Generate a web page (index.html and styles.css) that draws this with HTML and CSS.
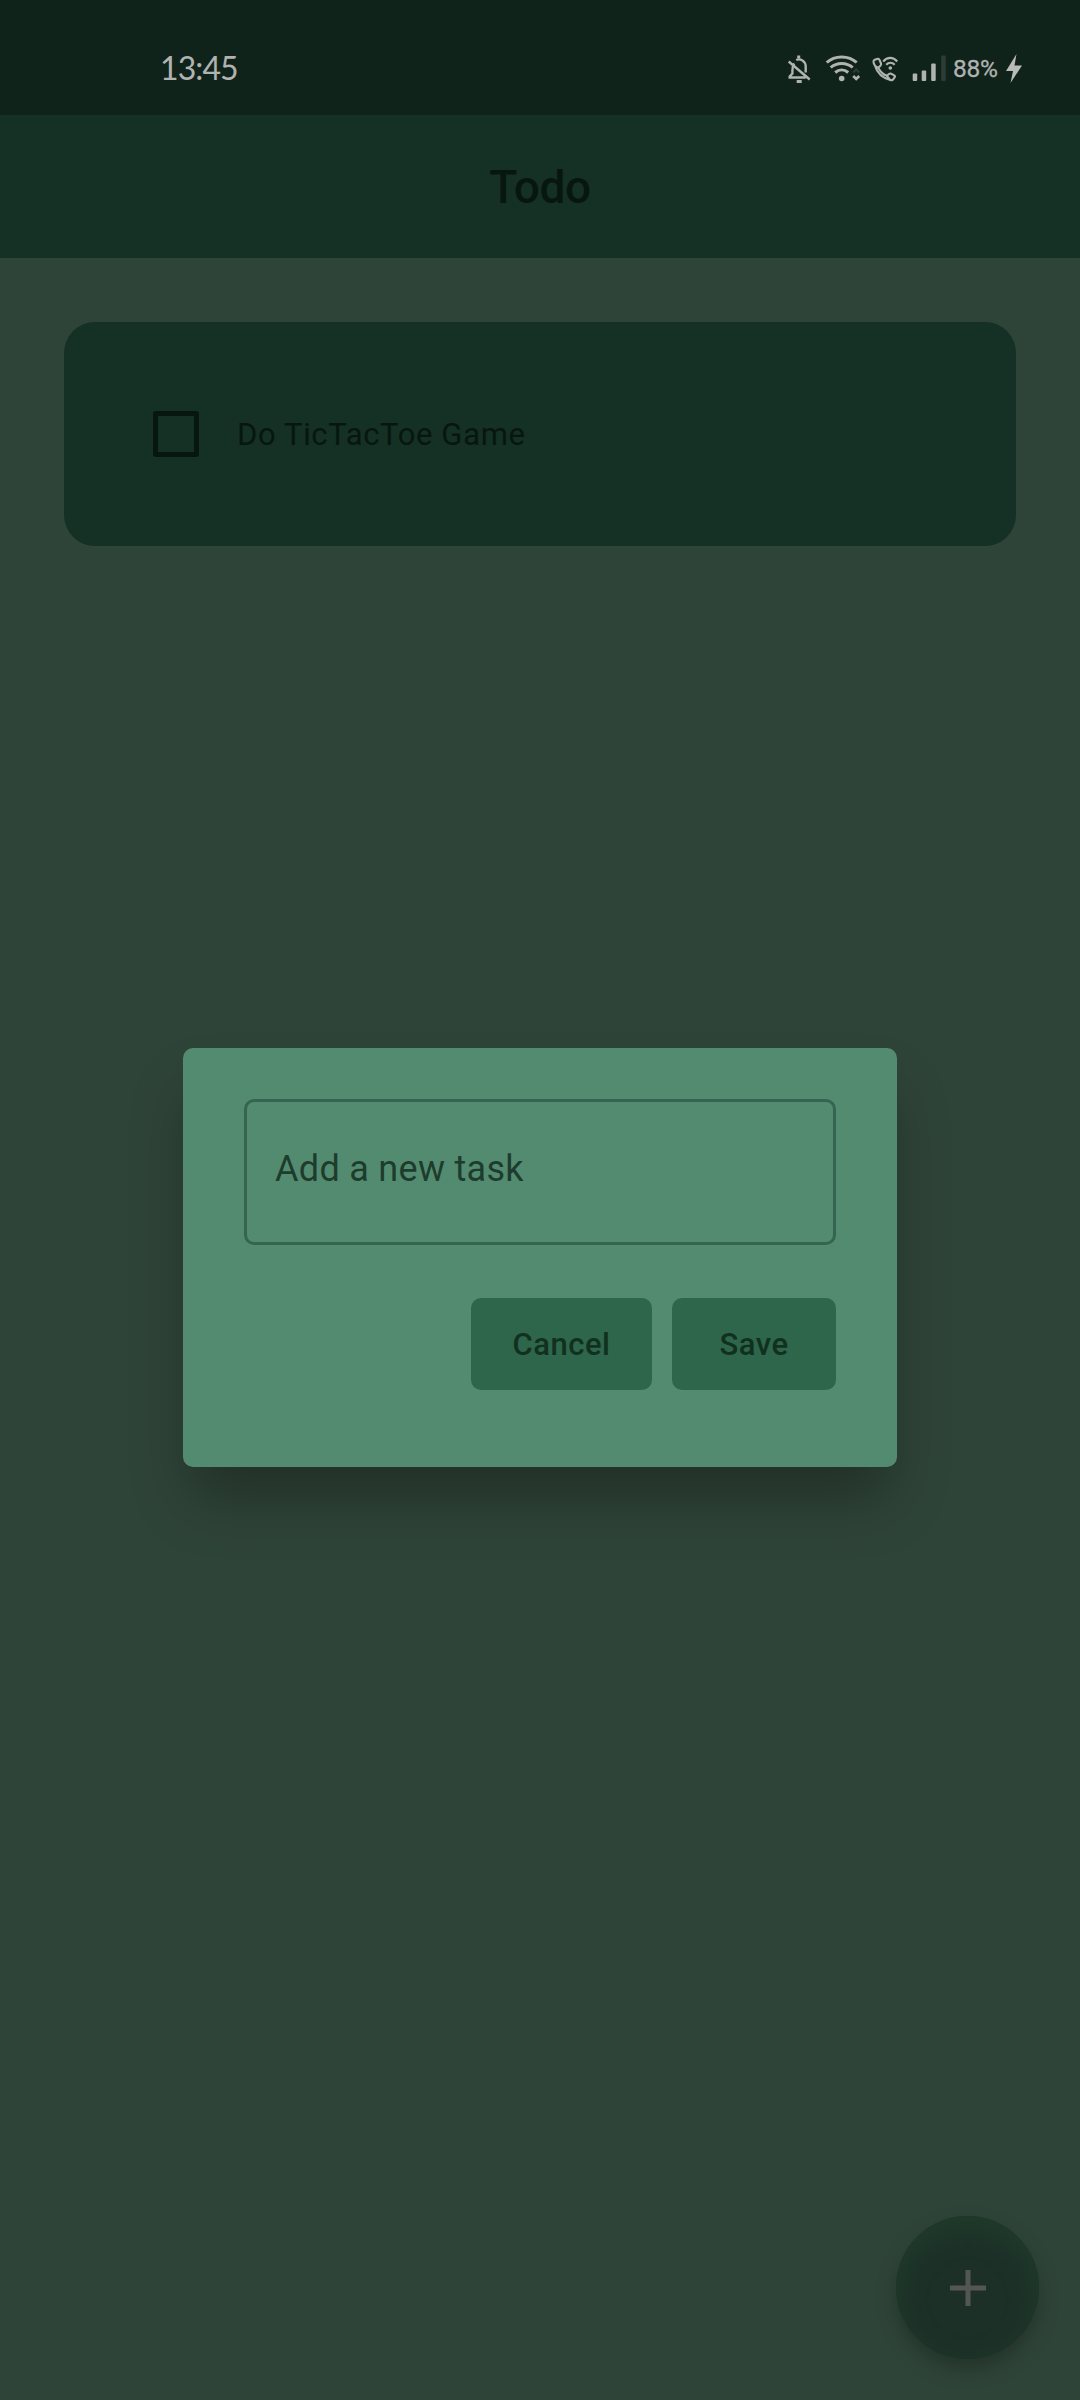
FILE: index.html
```html
<!DOCTYPE html>
<html lang="en">
<head>
<meta charset="utf-8">
<title>Todo</title>
<link rel="stylesheet" href="styles.css">
</head>
<body>
<div class="screen">
  <header class="status">
    <span class="clock">13:45</span>
    <svg class="status-icons" width="166" height="32" viewBox="-1.700 -0.500 166 32" fill="none" stroke="#b0b3b1" stroke-width="2.4">
      <g>
        <path d="M6.500 9C5 11 4.700 13 4.700 16V19L2 22V23H18M8.500 5.500C13 3.500 18 7 18 12V18M1 7L22 25"/>
        <path d="M11 1V4M9 27H14" stroke-width="3"/>
      </g>
      <g stroke-width="3">
        <path d="M39 8C47 .5 61 .5 69 8M43 13C49 7.500 59 7.500 65 13M47.500 18C51.500 14.500 56.500 14.500 60.500 18"/>
        <circle cx="54" cy="24" r="2.800" fill="#b0b3b1" stroke="none"/>
        <path d="M65.500 21.500L68.500 24.500L71.500 21.500" stroke-width="2.600"/>
        <path d="M65.500 18L68.500 15L71.500 18" stroke="#2d3d35" stroke-width="2"/>
      </g>
      <g>
        <path d="M86.500 5.500L90 4.300Q91.300 4 91.800 5.300L93.300 9Q93.800 10.300 92.700 11.300L90.500 13.300L87.300 11.300Q84.700 6.800 86.500 5.500ZM87.300 11.300C89.300 18 94 23.300 102.500 25.400M90.500 13.300C92.500 17 95.500 20 99 21.300M99 21.300L101.300 19.500Q102.300 18.700 103.500 19.300L106.500 20.800Q107.700 21.500 107 22.700L105.300 25Q104.500 26 102.500 25.400Z" stroke-width="2.100"/>
        <path d="M95.500 7C99.500 2.200 105.500 2.200 109.500 7M98.500 10.300C101 7.500 104.500 7.500 107 10.300" stroke-width="2.100"/>
        <circle cx="102.600" cy="13.500" r="1.800" fill="#b0b3b1" stroke="none"/>
      </g>
      <g stroke="none" fill="#b0b3b1">
        <rect x="125" y="19" width="4.500" height="7.500" rx="1"/>
        <rect x="134" y="16" width="4.500" height="10.500" rx="1"/>
        <rect x="143.500" y="9" width="4.500" height="17.500" rx="1"/>
        <rect x="153.500" y="1" width="4.500" height="25.500" rx="1" fill="#2d3d35"/>
      </g>
    </svg>
    <span class="battery">88%</span>
    <svg class="bolt" width="18" height="30" viewBox="0 0 18 30"><path d="M11.500 0L1 17H8L5.500 29L17 11.500H9.500Z" fill="#b9bcba"/></svg>
  </header>
  <div class="appbar"><h1 class="title">Todo</h1></div>
  <main class="content">
    <div class="task">
      <span class="checkbox"></span>
      <span class="task-name">Do TicTacToe Game</span>
    </div>
  </main>
  <section class="dialog">
    <div class="field">Add a new task</div>
    <div class="actions">
      <button class="btn cancel">Cancel</button>
      <button class="btn save">Save</button>
    </div>
  </section>
  <button class="fab" aria-label="Add task">
    <svg width="36" height="36" viewBox="0 0 36 36"><path d="M18 0V36M0 18H36" stroke="#535654" stroke-width="5"/></svg>
  </button>
</div>
</body>
</html>
```
FILE: styles.css
```css
* { box-sizing: border-box; }
body { margin: 0; font-family: Roboto, "Noto Sans", sans-serif; }
.screen {
  position: relative;
  display: flex;
  flex-direction: column;
  width: 1080px;
  height: 2400px;
  background: #2f4438;
  overflow: hidden;
}
.status {
  display: flex;
  align-items: flex-start;
  height: 115px;
  padding: 54px 0 0 160px;
  background: #10231b;
  color: #b0b3b1;
}
.clock {
  width: 626px;
  margin-top: -2px;
  font: 400 32px/32px Lato, sans-serif;
  letter-spacing: -0.9px;
}
.status-icons { flex: none; }
.battery {
  width: 53px;
  margin-left: 1px;
  font-size: 24.500px;
  font-weight: 400;
  line-height: 29px;
  letter-spacing: -0.3px;
  -webkit-text-stroke: 0.3px;
}
.bolt { flex: none; margin-left: -1px; }
.appbar {
  display: flex;
  justify-content: center;
  align-items: center;
  height: 143px;
  background: #153025;
}
.title {
  margin: 0;
  font-size: 46px;
  font-weight: 500;
  line-height: 54px;
  letter-spacing: -0.4px;
  color: #07170f;
}
.content { padding: 64px; }
.task {
  display: flex;
  align-items: center;
  height: 224px;
  padding-left: 89px;
  border-radius: 31px;
  background: #153025;
}
.checkbox {
  width: 46px;
  height: 46px;
  border: 5px solid #07170f;
  border-radius: 3px;
}
.task-name {
  margin-left: 38px;
  font-size: 31px;
  letter-spacing: 0.64px;
  color: #07170f;
}
.dialog {
  position: absolute;
  left: 183px;
  top: 1048px;
  width: 714px;
  height: 418.500px;
  padding: 51px 61px;
  border-radius: 10px;
  background: #538b70;
  box-shadow: 0 38px 60px -8px rgba(0, 0, 0, .3);
}
.field {
  height: 146px;
  padding: 43px 28px;
  border: 3px solid #356550;
  border-radius: 10px;
  font-size: 36px;
  line-height: 48px;
  letter-spacing: 0.3px;
  color: #1e3c2d;
}
.actions {
  display: flex;
  justify-content: flex-end;
  gap: 20px;
  margin-top: 53px;
}
.btn {
  height: 92px;
  padding: 2px 0 0;
  border: 0;
  border-radius: 10px;
  background: #2d664b;
  color: #12301f;
  font: 500 31px/90px Roboto, sans-serif;
  letter-spacing: 0.5px;
}
.cancel { width: 181px; }
.save { width: 164px; }
.fab {
  position: absolute;
  left: 896px;
  top: 2216px;
  display: grid;
  place-items: center;
  width: 143px;
  height: 143px;
  padding: 0;
  border: 0;
  border-radius: 50%;
  background: #1d3028;
  box-shadow: inset 0 11px 24px 3px #1f3a2a, 0 10px 22px -2px rgba(0, 0, 0, .28);
}
```
